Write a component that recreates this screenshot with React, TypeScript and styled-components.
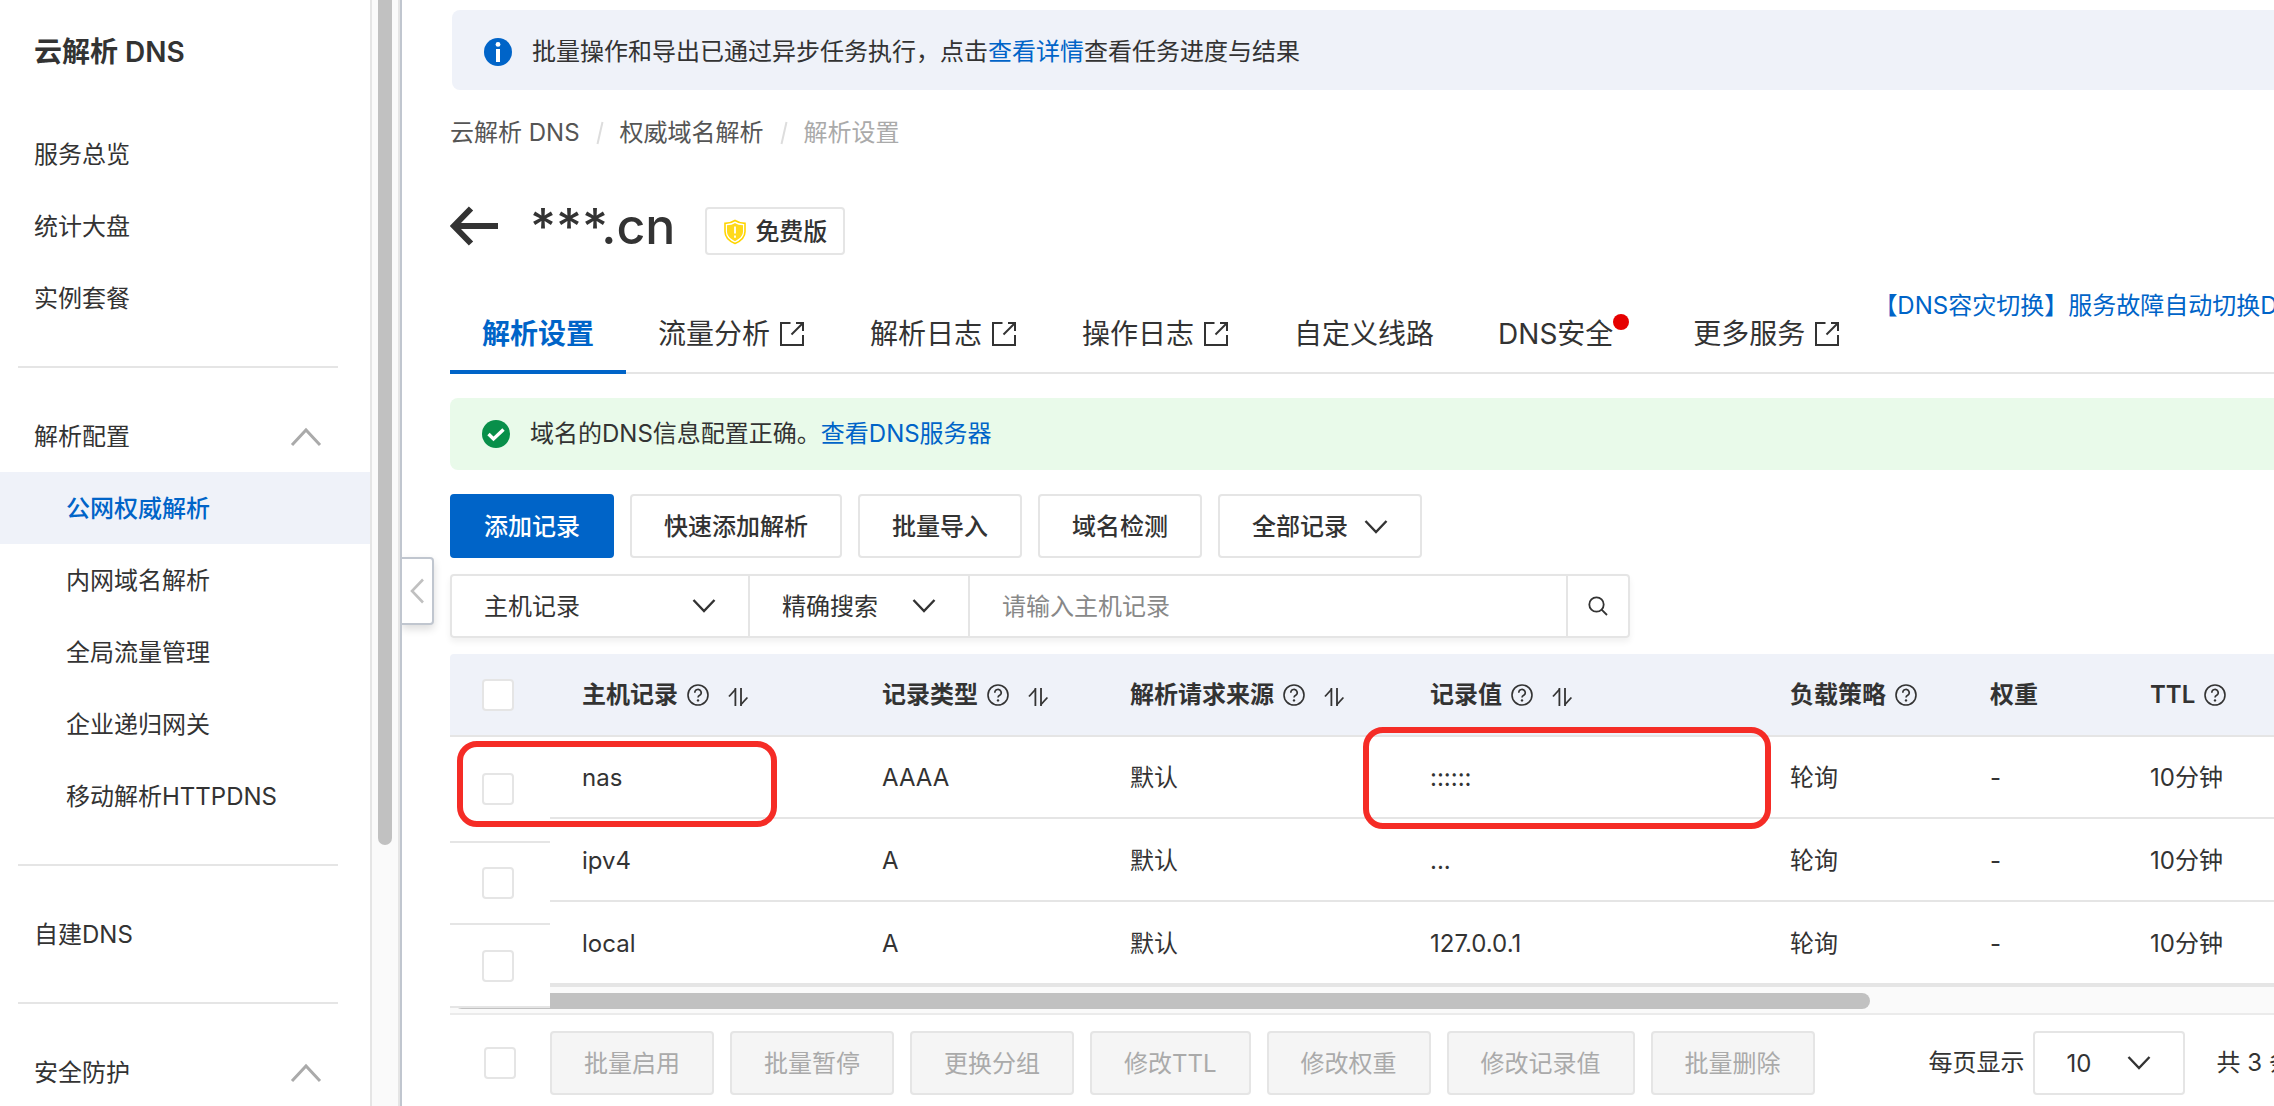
import React from 'react';
import styled, { createGlobalStyle } from 'styled-components';

const color = {
  text: '#333333',
  muted: '#555555',
  faint: '#aaaaaa',
  brand: '#0064c8',
  line: '#e5e5e5',
  tint: '#eff2f9',
  track: '#fafafa',
  thumb: '#c1c1c1',
  edge: '#c0c6cf',
  mark: '#f52c26',
};

const GlobalStyle = createGlobalStyle`
  *, *::before, *::after { box-sizing: border-box; }
  body {
    margin: 0;
    background: #fff;
    color: ${color.text};
    font-family: Inter, "Noto Sans CJK SC", sans-serif;
    font-size: 24px;
    line-height: 36px;
  }
  button, input, select { font: inherit; color: inherit; margin: 0; }
  a { color: inherit; text-decoration: none; }
  svg { display: block; flex: none; }
`;

const Shell = styled.div`
  display: flex;
  height: 100vh;
  overflow: hidden;
`;

/* Sidebar */

const Sidebar = styled.aside`
  display: flex;
  flex: none;
  width: 402px;
  border-right: 2px solid ${color.edge};
`;

const SideBody = styled.div`
  flex: 1;
  overflow: hidden;
`;

const SideTitle = styled.h2`
  margin: 0;
  padding: 32px 34px 46px;
  font-size: 28px;
  font-weight: 600;
  line-height: 40px;
`;

const SideLink = styled.a<{ $nested?: boolean; $active?: boolean }>`
  display: flex;
  align-items: center;
  height: 72px;
  padding-top: 2px;
  padding-left: ${(p) => (p.$nested ? 66 : 34)}px;
  color: ${(p) => (p.$active ? color.brand : color.text)};
  background: ${(p) => (p.$active ? color.tint : 'transparent')};
  font-weight: ${(p) => (p.$active ? 500 : 400)};
`;

const SideGroup = styled.button`
  display: flex;
  align-items: center;
  justify-content: space-between;
  width: 100%;
  height: 72px;
  padding: 2px 48px 0 34px;
  border: 0;
  background: none;
`;

const SideRule = styled.hr`
  height: 2px;
  margin: 32px 32px 32px 18px;
  border: 0;
  background: ${color.line};
`;

const SideTrack = styled.div`
  flex: none;
  width: 30px;
  padding: 0 6px;
  border: solid ${color.line};
  border-width: 0 2px;
  background: ${color.track};
`;

const SideThumb = styled.div`
  height: 845px;
  border-radius: 0 0 8px 8px;
  background: ${color.thumb};
`;

/* Main column */

const Main = styled.main`
  position: relative;
  flex: 1;
  min-width: 0;
  padding: 10px 0 0 48px;
  overflow: hidden;
  white-space: nowrap;
`;

const Collapse = styled.button`
  position: absolute;
  top: 557px;
  left: 0;
  display: flex;
  align-items: center;
  width: 32px;
  height: 68px;
  padding: 0 0 0 8px;
  border: 2px solid ${color.edge};
  border-left: 0;
  border-radius: 0 4px 4px 0;
  background: #fff;
  box-shadow: 0 4px 8px rgba(0, 0, 0, 0.14);
`;

const Notice = styled.div<{ $success?: boolean }>`
  display: flex;
  align-items: center;
  gap: 20px;
  height: ${(p) => (p.$success ? 72 : 80)}px;
  margin-left: ${(p) => (p.$success ? 0 : 2)}px;
  padding-top: ${(p) => (p.$success ? 0 : 4)}px;
  padding-left: 32px;
  border-radius: 8px 0 0 8px;
  background: ${(p) => (p.$success ? '#e9faea' : color.tint)};
`;

const BlueLink = styled.a`
  color: ${color.brand};
`;

const Crumbs = styled.nav`
  display: flex;
  align-items: center;
  gap: 14px;
  height: 36px;
  margin-top: 24px;
  padding-top: 2px;
  color: ${color.muted};
`;

const CurrentCrumb = styled.span`
  color: ${color.faint};
`;

const Heading = styled.div`
  display: flex;
  align-items: center;
  height: 72px;
  margin-top: 40px;
`;

const Back = styled.button`
  padding: 0;
  border: 0;
  background: none;
`;

const Domain = styled.h1`
  margin: 0 30px 0 32px;
  font-size: 50px;
  font-weight: 500;
  line-height: 72px;
`;

const Plan = styled.span`
  display: flex;
  align-items: center;
  gap: 8px;
  height: 48px;
  margin-top: 10px;
  padding: 2px 16px 0;
  border: 2px solid ${color.line};
  border-radius: 4px;
  font-weight: 500;
`;

const Tabs = styled.nav`
  display: flex;
  margin-top: 32px;
  height: 80px;
  border-bottom: 2px solid ${color.line};
`;

const Tab = styled.a<{ $active?: boolean }>`
  display: flex;
  flex: none;
  align-items: center;
  gap: 8px;
  height: 80px;
  padding: 4px 32px 0;
  border-bottom: 4px solid ${(p) => (p.$active ? color.brand : 'transparent')};
  color: ${(p) => (p.$active ? color.brand : color.text)};
  font-size: 28px;
  font-weight: ${(p) => (p.$active ? 600 : 400)};
  line-height: 40px;
`;

const TabText = styled.span`
  display: flex;
`;

const NewDot = styled.i`
  width: 16px;
  height: 16px;
  border-radius: 50%;
  background: #e60000;
`;

const Promo = styled.a`
  flex: none;
  color: ${color.brand};
  line-height: 24px;
`;

const Stack = styled.div`
  display: flex;
  flex-direction: column;
  gap: 16px;
  margin-top: 24px;
`;

const Toolbar = styled.div`
  display: flex;
  gap: 16px;
  margin-top: 8px;
`;

const Button = styled.button<{ $primary?: boolean }>`
  display: flex;
  flex: none;
  align-items: center;
  gap: 16px;
  height: 64px;
  padding: 2px 32px 0;
  border: 2px solid ${(p) => (p.$primary ? color.brand : color.line)};
  border-radius: 4px;
  background: ${(p) => (p.$primary ? color.brand : '#fff')};
  color: ${(p) => (p.$primary ? '#fff' : color.text)};
  font-weight: 500;

  &:disabled {
    background: #f5f5f5;
    color: ${color.faint};
    font-weight: 400;
  }
`;

const Search = styled.form`
  display: flex;
  align-self: flex-start;
  height: 64px;
  border: 2px solid ${color.line};
  border-radius: 4px;
  box-shadow: 0 4px 6px rgba(0, 0, 0, 0.06);
`;

const Picker = styled.span<{ $width: number; $boxed?: boolean }>`
  display: grid;
  flex: none;
  align-items: center;
  width: ${(p) => p.$width}px;
  height: ${(p) => (p.$boxed ? '64px' : '100%')};
  border: 0 solid ${color.line};
  border-width: ${(p) => (p.$boxed ? '2px' : '0 2px 0 0')};
  border-radius: ${(p) => (p.$boxed ? 4 : 0)}px;

  > * { grid-area: 1 / 1; }
  > svg { justify-self: end; margin-right: 32px; pointer-events: none; }
`;

const Select = styled.select`
  width: 100%;
  height: 100%;
  padding: 2px 32px 0;
  border: 0;
  background: none;
  appearance: none;
`;

const Keyword = styled.input`
  width: 598px;
  padding: 2px 32px 0;
  border: 0;
  border-right: 2px solid ${color.line};
  background: none;

  &::placeholder { color: #888; opacity: 1; }
`;

const SearchButton = styled.button`
  display: grid;
  place-items: center;
  width: 60px;
  border: 0;
  background: none;
`;

/* Records */

const Records = styled.section`
  position: relative;
  display: grid;
  grid-template-columns: 100px 1fr;
`;

const Pinned = styled.table`
  position: relative;
  z-index: 1;
  width: 100px;
  margin-bottom: -21px;
  border-collapse: separate;
  border-spacing: 0;
  background: #fff;
`;

const PinnedCell = styled.td<{ $height: number }>`
  height: ${(p) => p.$height}px;
  padding: 0 0 0 32px;
  border-bottom: 2px solid ${color.line};
`;

const PinnedHead = styled.th`
  height: 83px;
  padding: 0 0 0 32px;
  border-bottom: 2px solid ${color.line};
  border-radius: 4px 0 0 0;
  background: ${color.tint};
`;

const Check = styled.input`
  display: block;
  flex: none;
  width: 32px;
  height: 32px;
  border: 2px solid ${color.line};
  border-radius: 4px;
  background: #fff;
  appearance: none;
`;

const Viewport = styled.div`
  min-width: 0;
  border-bottom: 2px solid ${color.line};
  overflow: hidden;
`;

const Table = styled.table`
  width: 1968px;
  table-layout: fixed;
  border-collapse: separate;
  border-spacing: 0;
`;

const Head = styled.th`
  height: 83px;
  padding: 0 32px;
  border-bottom: 2px solid ${color.line};
  background: ${color.tint};
  font-weight: 600;
  text-align: left;
`;

const HeadLabel = styled.span`
  display: flex;
  align-items: center;
  gap: 8px;
`;

const Cell = styled.td<{ $height: number }>`
  height: ${(p) => p.$height}px;
  padding: 2px 32px 0;
  border-bottom: 2px solid ${color.line};
`;

const ScrollTrack = styled.div`
  grid-column: 1 / -1;
  height: 28px;
  padding: 6px 0 0 4px;
  border-bottom: 2px solid #ebebeb;
  background: ${color.track};
`;

const ScrollThumb = styled.div`
  width: 1416px;
  height: 16px;
  border-radius: 8px;
  background: ${color.thumb};
`;

const Mark = styled.div<{ $x: number; $y: number; $w: number; $h: number }>`
  position: absolute;
  z-index: 2;
  left: ${(p) => p.$x}px;
  top: ${(p) => p.$y}px;
  width: ${(p) => p.$w}px;
  height: ${(p) => p.$h}px;
  border: 6px solid ${color.mark};
  border-radius: 20px;
  pointer-events: none;
`;

const Footer = styled.footer`
  display: flex;
  align-items: center;
  gap: 34px;
  padding-left: 34px;
`;

const Batch = styled.div`
  display: flex;
  gap: 16px;
`;

const Pager = styled.div`
  display: flex;
  align-items: center;
  margin-left: 80px;
`;

const PageSize = styled.label`
  display: flex;
  align-items: center;
  gap: 8px;
`;

const Total = styled.span`
  margin-left: 32px;
`;

/* Icons */

const Chevron = ({ up, tone = color.text }: { up?: boolean; tone?: string }) => (
  <svg
    width={up ? 32 : 24}
    height={up ? 20 : 16}
    viewBox={up ? '0 0 32 20' : '0 0 24 16'}
    fill="none"
    stroke={tone}
    strokeWidth={up ? 3 : 2.4}
  >
    <path d={up ? 'M2 18 16 3l14 15' : 'M1.5 2 12 13 22.5 2'} />
  </svg>
);

const ExternalIcon = () => (
  <svg width="28" height="28" viewBox="0 0 28 28" fill="none" stroke={color.text} strokeWidth="2">
    <path d="M12.5 3H3v22h22V15" />
    <path d="M18 3h7v8" />
    <path d="M25 3 13.500 14.500" />
  </svg>
);

const HelpIcon = () => (
  <svg width="24" height="24" viewBox="0 0 24 24" fill="none" stroke={color.text} strokeWidth="1.6">
    <circle cx="12" cy="12" r="10" />
    <path d="M8.800 9.800a3.200 3.200 0 1 1 4.900 2.500c-1.100.6-1.700 1.100-1.700 2.300" />
    <circle cx="12" cy="17.400" r="1.200" fill={color.text} stroke="none" />
  </svg>
);

const SortIcon = () => (
  <svg width="36" height="24" viewBox="0 0 36 24" fill="none" stroke={color.text} strokeWidth="1.8">
    <path d="M17.400 5v18" />
    <path d="M11 13.500 17.400 6.500" />
    <path d="M23 5v18" />
    <path d="M23 21.500 29.400 14.500" />
  </svg>
);

const InfoIcon = () => (
  <svg width="28" height="28" viewBox="0 0 28 28">
    <circle cx="14" cy="14" r="14" fill={color.brand} />
    <circle cx="14" cy="6.4" r="2.4" fill="#fff" />
    <rect x="12" y="11" width="4" height="13" fill="#fff" />
  </svg>
);

const OkIcon = () => (
  <svg width="28" height="28" viewBox="0 0 28 28">
    <circle cx="14" cy="14" r="14" fill="#088f4a" />
    <path d="m6.5 14 5 5 10-9.500" fill="none" stroke="#fff" strokeWidth="3.4" />
  </svg>
);

const BackIcon = () => (
  <svg width="48" height="40" viewBox="0 0 48 40" fill="none" stroke={color.text} strokeWidth="6">
    <path d="M48 20H4" />
    <path d="M21 2.500 4 20l17 17.500" />
  </svg>
);

const ShieldIcon = () => (
  <svg width="24" height="26" viewBox="0 0 24 26">
    <path
      d="M12 1.500c3 2 6 2.800 10 2.900v8.100c0 5.500-4.500 9.700-10 12-5.500-2.300-10-6.500-10-12V4.400c4-.1 7-.9 10-2.900Z"
      fill="none"
      stroke="#ffd500"
      strokeWidth="1.6"
    />
    <path d="M12 4c2.500 1.500 4.600 2.100 8 2.300v6.300c0 4.200-3.500 7.600-8 9.600-4.500-2-8-5.400-8-9.600V6.300C7.400 6.100 9.500 5.500 12 4Z" fill="#ffd91a" />
    <path d="M12 7.500v7M12 16.500v2.300" stroke="#fff" strokeWidth="1.800" />
  </svg>
);

const SearchIcon = () => (
  <svg width="20" height="20" viewBox="0 0 20 20" fill="none" stroke={color.text} strokeWidth="1.800">
    <circle cx="8.500" cy="8.500" r="7.200" />
    <path d="m13.600 13.600 5.400 5.400" />
  </svg>
);

const CollapseIcon = () => (
  <svg width="14" height="26" viewBox="0 0 14 26" fill="none" stroke="#c0c0c0" strokeWidth="2.600">
    <path d="M13 1.500 2 13l11 11.500" />
  </svg>
);

const SlashIcon = () => (
  <svg width="12" height="24" viewBox="0 0 12 24" fill="none" stroke="#dddddd" strokeWidth="2">
    <path d="M8.500 1 3.500 23" />
  </svg>
);

/* Data */

const overview = ['服务总览', '统计大盘', '实例套餐'];
const resolution = ['公网权威解析', '内网域名解析', '全局流量管理', '企业递归网关', '移动解析HTTPDNS'];

const columns = [
  { label: '主机记录', width: 300, help: true, sort: true },
  { label: '记录类型', width: 248, help: true, sort: true },
  { label: '解析请求来源', width: 300, help: true, sort: true },
  { label: '记录值', width: 360, help: true, sort: true },
  { label: '负载策略', width: 200, help: true },
  { label: '权重', width: 160 },
  { label: 'TTL', width: 400, help: true },
];

const records = [
  { host: 'nas', type: 'AAAA', value: '::::::', height: 82, pinned: 106 },
  { host: 'ipv4', type: 'A', value: '...', height: 83, pinned: 82 },
  { host: 'local', type: 'A', value: '127.0.0.1', height: 83, pinned: 83 },
];

const batchActions = ['批量启用', '批量暂停', '更换分组', '修改TTL', '修改权重', '修改记录值', '批量删除'];

export default function App() {
  return (
    <Shell>
      <GlobalStyle />
      <Sidebar>
        <SideBody>
          <SideTitle>云解析 DNS</SideTitle>
          {overview.map((name) => (
            <SideLink key={name} href="#">{name}</SideLink>
          ))}
          <SideRule />
          <SideGroup type="button">解析配置<Chevron up tone="#aaaaaa" /></SideGroup>
          {resolution.map((name, i) => (
            <SideLink key={name} href="#" $nested $active={i === 0}>{name}</SideLink>
          ))}
          <SideRule />
          <SideLink href="#">自建DNS</SideLink>
          <SideRule />
          <SideGroup type="button">安全防护<Chevron up tone="#aaaaaa" /></SideGroup>
        </SideBody>
        <SideTrack><SideThumb /></SideTrack>
      </Sidebar>

      <Main>
        <Notice>
          <InfoIcon />
          <span>批量操作和导出已通过异步任务执行，点击<BlueLink href="#">查看详情</BlueLink>查看任务进度与结果</span>
        </Notice>

        <Crumbs>
          <a href="#">云解析 DNS</a>
          <SlashIcon />
          <a href="#">权威域名解析</a>
          <SlashIcon />
          <CurrentCrumb>解析设置</CurrentCrumb>
        </Crumbs>

        <Heading>
          <Back type="button" aria-label="返回"><BackIcon /></Back>
          <Domain>***.cn</Domain>
          <Plan><ShieldIcon />免费版</Plan>
        </Heading>

        <Tabs>
          <Tab href="#" $active>解析设置</Tab>
          <Tab href="#">流量分析<ExternalIcon /></Tab>
          <Tab href="#">解析日志<ExternalIcon /></Tab>
          <Tab href="#">操作日志<ExternalIcon /></Tab>
          <Tab href="#">自定义线路</Tab>
          <Tab href="#"><TabText>DNS安全<NewDot /></TabText></Tab>
          <Tab href="#">更多服务<ExternalIcon /></Tab>
          <Promo href="#">【DNS容灾切换】服务故障自动切换DNS</Promo>
        </Tabs>

        <Stack>
          <Notice $success>
            <OkIcon />
            <span>域名的DNS信息配置正确。<BlueLink href="#">查看DNS服务器</BlueLink></span>
          </Notice>

          <Toolbar>
            <Button type="button" $primary>添加记录</Button>
            <Button type="button">快速添加解析</Button>
            <Button type="button">批量导入</Button>
            <Button type="button">域名检测</Button>
            <Button type="button">全部记录<Chevron /></Button>
          </Toolbar>

          <Search onSubmit={(e) => e.preventDefault()}>
            <Picker $width={298}>
              <Select aria-label="搜索字段"><option>主机记录</option></Select>
              <Chevron />
            </Picker>
            <Picker $width={220}>
              <Select aria-label="匹配方式"><option>精确搜索</option></Select>
              <Chevron />
            </Picker>
            <Keyword type="text" aria-label="主机记录" placeholder="请输入主机记录" />
            <SearchButton type="submit" aria-label="搜索"><SearchIcon /></SearchButton>
          </Search>

          <Records>
            <Pinned>
              <thead>
                <tr><PinnedHead><Check type="checkbox" aria-label="全选" /></PinnedHead></tr>
              </thead>
              <tbody>
                {records.map((r) => (
                  <tr key={r.host}>
                    <PinnedCell $height={r.pinned}><Check type="checkbox" aria-label={r.host} /></PinnedCell>
                  </tr>
                ))}
              </tbody>
            </Pinned>
            <Viewport>
              <Table>
                <colgroup>
                  {columns.map((c) => <col key={c.label} width={c.width} />)}
                </colgroup>
                <thead>
                  <tr>
                    {columns.map((c) => (
                      <Head key={c.label}>
                        <HeadLabel>
                          {c.label}
                          {c.help && <HelpIcon />}
                          {c.sort && <SortIcon />}
                        </HeadLabel>
                      </Head>
                    ))}
                  </tr>
                </thead>
                <tbody>
                  {records.map((r) => (
                    <tr key={r.host}>
                      {[r.host, r.type, '默认', r.value, '轮询', '-', '10分钟'].map((text, i) => (
                        <Cell key={i} $height={r.height}>{text}</Cell>
                      ))}
                    </tr>
                  ))}
                </tbody>
              </Table>
            </Viewport>
            <ScrollTrack><ScrollThumb /></ScrollTrack>
            <Mark $x={7} $y={87} $w={320} $h={86} />
            <Mark $x={913} $y={73} $w={408} $h={102} />
          </Records>

          <Footer>
            <Check type="checkbox" aria-label="选择全部记录" />
            <Batch>
              {batchActions.map((name) => (
                <Button key={name} type="button" disabled>{name}</Button>
              ))}
            </Batch>
            <Pager>
              <PageSize>
                每页显示
                <Picker $width={152} $boxed>
                  <Select><option>10</option></Select>
                  <Chevron />
                </Picker>
              </PageSize>
              <Total>共 3 条</Total>
            </Pager>
          </Footer>
        </Stack>

        <Collapse type="button" aria-label="收起侧栏"><CollapseIcon /></Collapse>
      </Main>
    </Shell>
  );
}
